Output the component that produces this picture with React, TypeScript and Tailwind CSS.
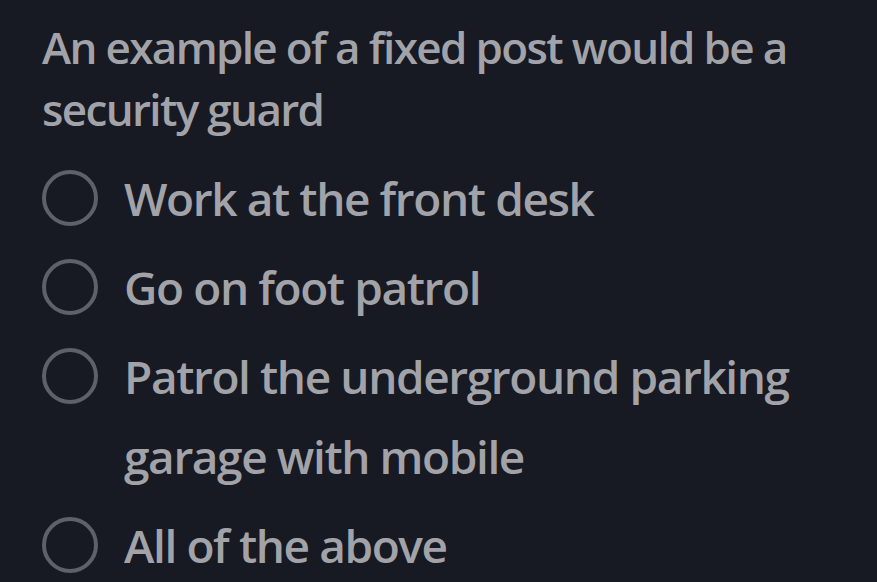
import React from "react";

const options = [
  "Work at the front desk",
  "Go on foot patrol",
  "Patrol the underground parking garage with mobile",
  "All of the above",
];

export default function App() {
  return (
    <div
      className="w-[877px] h-[582px] overflow-hidden bg-[#171923] text-[#a2a3a8] pl-[42px] pr-[40px] pt-[16px]"
      style={{ fontFamily: '"Open Sans", sans-serif' }}
    >
      <p className="text-[44px] leading-[62px] font-semibold tracking-[-1.65px]">
        An example of a fixed post would be a security guard
      </p>
      <div className="mt-[18px] flex flex-col gap-[9px]">
        {options.map((o) => (
          <label key={o} className="flex items-start gap-[26px]">
            <span className="mt-[12px] shrink-0 w-[56px] h-[56px] rounded-full border-[4px] border-[#5e6168]" />
            <span className="text-[46px] leading-[80px] font-semibold tracking-[-1.4px] pr-[40px]">{o}</span>
          </label>
        ))}
      </div>
    </div>
  );
}
